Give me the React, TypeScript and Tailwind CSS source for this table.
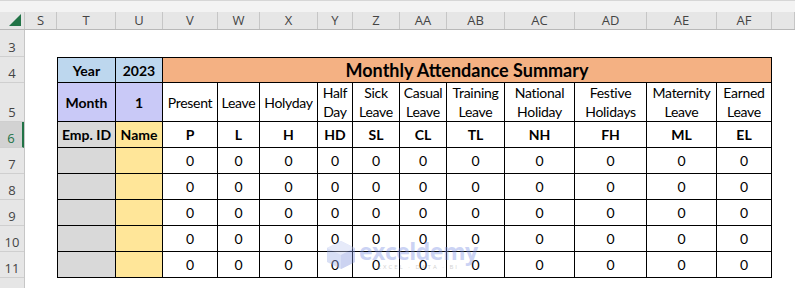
import React from "react"

const columns = [
    { name: "S", w: "w-[32px]" },
    { name: "T", w: "w-[59px]" },
    { name: "U", w: "w-[47px]" },
    { name: "V", w: "w-[55px]" },
    { name: "W", w: "w-[42px]" },
    { name: "X", w: "w-[58px]" },
    { name: "Y", w: "w-[35px]" },
    { name: "Z", w: "w-[47px]" },
    { name: "AA", w: "w-[47px]" },
    { name: "AB", w: "w-[58px]" },
    { name: "AC", w: "w-[70px]" },
    { name: "AD", w: "w-[72px]" },
    { name: "AE", w: "w-[70px]" },
    { name: "AF", w: "w-[55px]" },
    { name: "", w: "w-[23px]" },
]

const rows = [
    { n: "3", h: "h-[27px]" },
    { n: "4", h: "h-[26px]" },
    { n: "5", h: "h-[39px]" },
    { n: "6", h: "h-[26px]", active: true },
    { n: "7", h: "h-[26px]" },
    { n: "8", h: "h-[26px]" },
    { n: "9", h: "h-[26px]" },
    { n: "10", h: "h-[26px]" },
    { n: "11", h: "h-[26px]" },
    { n: "", h: "h-[26px]" },
]

const headings = [
    ["Present"],
    ["Leave"],
    ["Holyday"],
    ["Half", "Day"],
    ["Sick", "Leave"],
    ["Casual", "Leave"],
    ["Training", "Leave"],
    ["National", "Holiday"],
    ["Festive", "Holidays"],
    ["Maternity", "Leave"],
    ["Earned", "Leave"],
]

const codes = ["P", "L", "H", "HD", "SL", "CL", "TL", "NH", "FH", "ML", "EL"]

const cell = "flex items-center justify-center border-r border-b border-black"

export default function App() {
    return (
        <div className="w-[795px] h-[288px] overflow-hidden bg-white relative text-[#444] font-['Open_Sans',sans-serif]">
            {/* top strip */}
            <div className="h-[12px] bg-[#f3f3f3] border-t border-[#d6d6d6]"></div>

            {/* column headers */}
            <div className="flex h-[18px] bg-[#e6e6e6] border-b border-[#b8b8b8]">
                <div className="w-[25px] shrink-0 flex items-end justify-end pr-[3px] pb-[3px] border-r border-[#c6c6c6]">
                    <svg width="12" height="12" viewBox="0 0 12 12">
                        <polygon points="12,0 12,12 0,12" fill="#217346" />
                    </svg>
                </div>
                {columns.map((c, i) => (
                    <div
                        key={i}
                        className={`${c.w} shrink-0 flex items-center justify-center text-[13px] leading-none border-r border-[#c6c6c6]`}
                    >
                        {c.name}
                    </div>
                ))}
            </div>

            <div className="flex">
                {/* row headers */}
                <div className="w-[25px] shrink-0 bg-[#e6e6e6] border-r border-[#c6c6c6]">
                    {rows.map((r, i) => (
                        <div
                            key={i}
                            className={`${r.h} flex items-end justify-center pb-[2px] text-[13px] leading-none border-b border-[#cfcfcf] ${r.active ? "bg-[#d2d2d2] text-[#217346] border-r-2 border-r-[#217346]" : ""}`}
                        >
                            {r.n}
                        </div>
                    ))}
                </div>

                {/* sheet */}
                <div className="pl-[32px] pt-[27px] text-black font-['Lato',sans-serif] text-[14px]">
                    <div className="grid grid-cols-[58px_47px_55px_42px_58px_35px_47px_47px_58px_70px_72px_70px_55px] grid-rows-[25px_39px_26px_26px_26px_26px_26px_26px] border-l border-t border-black">
                        <div className={`${cell} bg-[#bdd7ee] font-bold`}>Year</div>
                        <div className={`${cell} bg-[#bdd7ee] font-bold`}>2023</div>
                        <div className={`${cell} col-span-11 bg-[#f4b183] font-bold text-[18px]`}>
                            Monthly Attendance Summary
                        </div>

                        <div className={`${cell} bg-[#c9c9f7] font-bold`}>Month</div>
                        <div className={`${cell} bg-[#c9c9f7] font-bold`}>1</div>
                        {headings.map((h, i) => (
                            <div key={i} className={`${cell} flex-col leading-[19px] tracking-[-0.3px]`}>
                                {h.map((line) => (
                                    <span key={line}>{line}</span>
                                ))}
                            </div>
                        ))}

                        <div className={`${cell} bg-[#d9d9d9] font-bold`}>Emp. ID</div>
                        <div className={`${cell} bg-[#ffe699] font-bold`}>Name</div>
                        {codes.map((c) => (
                            <div key={c} className={`${cell} font-bold`}>
                                {c}
                            </div>
                        ))}

                        {[7, 8, 9, 10, 11].map((r) => (
                            <React.Fragment key={r}>
                                <div className={`${cell} bg-[#d9d9d9]`}></div>
                                <div className={`${cell} bg-[#ffe699]`}></div>
                                {codes.map((c) => (
                                    <div key={c} className={cell}>
                                        0
                                    </div>
                                ))}
                            </React.Fragment>
                        ))}
                    </div>
                </div>
            </div>

            {/* watermark */}
            <div className="absolute left-[325px] top-[240px] flex items-center gap-[2px] opacity-40 pointer-events-none">
                <svg width="32" height="30" viewBox="0 0 32 30">
                    <polygon points="16,1 30,8 30,22 16,29 2,22 2,8" fill="#9fb0e8" />
                    <polygon points="16,1 30,8 16,15 2,8" fill="#c3cdf2" />
                    <polygon points="16,15 30,8 30,22 16,29" fill="#8193dd" />
                </svg>
                <div className="flex flex-col items-center leading-none">
                    <span className="font-['Open_Sans',sans-serif] font-bold text-[23px] text-[#7e93e6] tracking-[-0.5px]">exceldemy</span>
                    <span className="text-[6px] tracking-[2px] text-[#8b8b8b] mt-[1px]">EXCEL · DATA · BI</span>
                </div>
            </div>
        </div>
    )
}
